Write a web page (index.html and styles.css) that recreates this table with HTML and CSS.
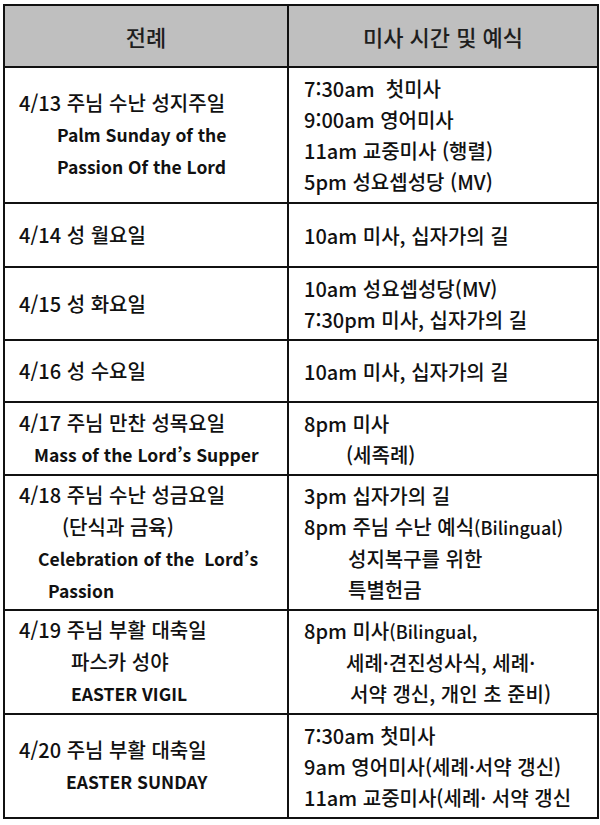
FILE: index.html
```html
<!DOCTYPE html>
<html lang="ko">
<head>
<meta charset="utf-8">
<title>성주간 전례 일정</title>
<link rel="stylesheet" href="styles.css">
</head>
<body>
<table class="schedule">
  <colgroup><col class="c1"><col class="c2"></colgroup>
  <thead>
    <tr class="h-head">
      <th>전례</th>
      <th>미사 시간 및 예식</th>
    </tr>
  </thead>
  <tbody>
    <tr class="h-136">
      <td class="left">
        <div class="ln">4/13 주님 수난 성지주일</div>
        <div class="ln en i38">Palm Sunday of the</div>
        <div class="ln en i38">Passion Of the Lord</div>
      </td>
      <td class="right">
        <div class="ln">7:30am&nbsp; 첫미사</div>
        <div class="ln">9:00am 영어미사</div>
        <div class="ln">11am 교중미사 (행렬)</div>
        <div class="ln">5pm 성요셉성당 (MV)</div>
      </td>
    </tr>
    <tr class="h-64">
      <td class="left"><div class="ln">4/14 성 월요일</div></td>
      <td class="right"><div class="ln">10am 미사, 십자가의 길</div></td>
    </tr>
    <tr class="h-73">
      <td class="left"><div class="ln">4/15 성 화요일</div></td>
      <td class="right">
        <div class="ln">10am 성요셉성당(MV)</div>
        <div class="ln">7:30pm 미사, 십자가의 길</div>
      </td>
    </tr>
    <tr class="h-62">
      <td class="left"><div class="ln">4/16 성 수요일</div></td>
      <td class="right"><div class="ln">10am 미사, 십자가의 길</div></td>
    </tr>
    <tr class="h-73">
      <td class="left">
        <div class="ln">4/17 주님 만찬 성목요일</div>
        <div class="ln en i15">Mass of the Lord’s Supper</div>
      </td>
      <td class="right">
        <div class="ln">8pm 미사</div>
        <div class="ln i42">(세족례)</div>
      </td>
    </tr>
    <tr class="h-135">
      <td class="left">
        <div class="ln">4/18 주님 수난 성금요일</div>
        <div class="ln i43">(단식과 금육)</div>
        <div class="ln en i19">Celebration of the&nbsp; Lord’s</div>
        <div class="ln en i29">Passion</div>
      </td>
      <td class="right">
        <div class="ln">3pm 십자가의 길</div>
        <div class="ln">8pm 주님 수난 예식<span class="sm">(Bilingual)</span></div>
        <div class="ln i44">성지복구를 위한</div>
        <div class="ln i44">특별헌금</div>
      </td>
    </tr>
    <tr class="h-104">
      <td class="left">
        <div class="ln">4/19 주님 부활 대축일</div>
        <div class="ln i52">파스카 성야</div>
        <div class="ln en i52">EASTER VIGIL</div>
      </td>
      <td class="right">
        <div class="ln">8pm 미사<span class="sm">(Bilingual,</span></div>
        <div class="ln i42">세례·견진성사식, 세례·</div>
        <div class="ln i46">서약 갱신, 개인 초 준비)</div>
      </td>
    </tr>
    <tr class="h-104">
      <td class="left">
        <div class="ln">4/20 주님 부활 대축일</div>
        <div class="ln en i47">EASTER SUNDAY</div>
      </td>
      <td class="right">
        <div class="ln">7:30am 첫미사</div>
        <div class="ln">9am 영어미사(세례·서약 갱신)</div>
        <div class="ln">11am 교중미사(세례· 서약 갱신</div>
      </td>
    </tr>
  </tbody>
</table>
</body>
</html>
```
FILE: styles.css
```css
html, body {
  margin: 0;
  padding: 0;
  background: #ffffff;
}

body {
  font-family: "Noto Sans CJK KR", "Noto Sans", sans-serif;
  font-weight: 500;
  color: #111111;
}

.schedule {
  border-collapse: collapse;
  margin: 4px 0 0 3px;
  table-layout: fixed;
  width: 594px;
}

.c1 { width: 284px; }
.c2 { width: 310px; }

.schedule th,
.schedule td {
  border: 2px solid #111111;
  padding: 0;
  vertical-align: middle;
}

.schedule th {
  background: #bfbfbf;
  font-weight: 500;
  font-size: 22px;
  color: #1e1e1e;
  text-align: center;
}

.h-head { height: 62px; }
.h-136 { height: 136px; }
.h-64 { height: 64px; }
.h-73 { height: 73px; }
.h-62 { height: 62px; }
.h-135 { height: 135px; }
.h-104 { height: 104px; }

.schedule .left {
  padding-left: 14px;
  font-size: 20px;
  line-height: 32px;
}

.schedule .right {
  padding-left: 15px;
  font-size: 20px;
  line-height: 31px;
}

.ln {
  white-space: nowrap;
}

.ln.en {
  font-weight: bold;
  font-size: 17.5px;
}

.sm {
  font-size: 18px;
}

.i15 { padding-left: 15px; }
.i19 { padding-left: 19px; }
.i29 { padding-left: 29px; }
.i38 { padding-left: 38px; }
.i42 { padding-left: 42px; }
.i43 { padding-left: 43px; }
.i44 { padding-left: 44px; }
.i46 { padding-left: 46px; }
.i47 { padding-left: 47px; }
.i52 { padding-left: 52px; }
```
